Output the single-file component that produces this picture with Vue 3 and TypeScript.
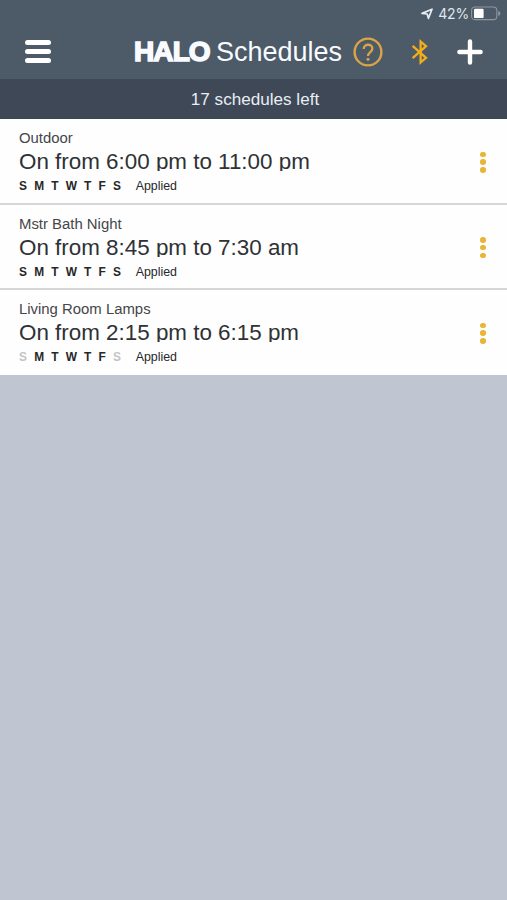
<script setup lang="ts">
interface Schedule {
  name: string
  time: string
  off: number[]
}

const days: string[] = ['S', 'M', 'T', 'W', 'T', 'F', 'S']
const schedules: Schedule[] = [
  { name: 'Outdoor', time: 'On from 6:00 pm to 11:00 pm', off: [] },
  { name: 'Mstr Bath Night', time: 'On from 8:45 pm to 7:30 am', off: [] },
  { name: 'Living Room Lamps', time: 'On from 2:15 pm to 6:15 pm', off: [0, 6] },
]
</script>

<template>
  <div class="screen">
    <div class="status">
      <svg class="location" width="13" height="12" viewBox="0 0 13 12">
        <path d="M2 5.4 L12 1.2 L8.4 10.4 L7.2 6 Z" fill="none" stroke="#e4edf3" stroke-width="1.7" stroke-linejoin="round" />
      </svg>
      <span class="percent">42%</span>
      <svg class="battery" width="31" height="16" viewBox="0 0 31 16">
        <rect x="1.6" y="1" width="25.2" height="12.6" rx="3.4" fill="none" stroke="#8b98a2" stroke-width="1.1" />
        <rect x="4" y="2.7" width="9.6" height="9.4" rx="1.2" fill="#fff" />
        <path d="M28.2 4.8 Q30.4 5.8 30.4 7.4 Q30.4 9 28.2 10 Z" fill="#8b98a2" />
      </svg>
    </div>

    <header class="bar">
      <button class="menu" aria-label="Menu"><i></i><i></i><i></i></button>
      <h1 class="title"><b>HALO</b><span>Schedules</span></h1>
      <svg class="help" width="30" height="30" viewBox="0 0 30 30" fill="none" stroke="#d9a548">
        <circle cx="15" cy="15" r="13.4" stroke-width="2.4" />
        <path d="M10.7 12 C10.7 6.4 19.4 6.4 19.4 11.6 C19.4 15.1 15 15 15 19" stroke-width="2.3" />
        <circle cx="15" cy="22.2" r="1.5" fill="#d9a548" stroke="none" />
      </svg>
      <svg class="bluetooth" width="18" height="26" viewBox="0 0 18 26" fill="none" stroke="#f0ae1c" stroke-width="2.3">
        <path d="M1.6 6.8 L15 18.8 L9.6 23.4 V2.6 L15 7.2 L1.6 19.2" />
      </svg>
      <svg class="plus" width="26" height="26" viewBox="0 0 26 26" stroke="#fff" stroke-width="4.4" stroke-linecap="round">
        <path d="M13 2.4 V23.6 M2.4 13 H23.6" />
      </svg>
    </header>

    <div class="remaining">17 schedules left</div>

    <main>
      <section v-for="item in schedules" :key="item.name" class="row">
        <div class="info">
          <div class="name">{{ item.name }}</div>
          <div class="time">{{ item.time }}</div>
          <div class="meta">
            <span v-for="(day, i) in days" :key="i" class="day" :class="{ off: item.off.includes(i) }">{{ day }}</span>
            <span class="applied">Applied</span>
          </div>
        </div>
        <div class="more"><i></i><i></i><i></i></div>
      </section>
    </main>
  </div>
</template>

<style>
body {
  background: #bfc5d1;
}
</style>

<style scoped>
.screen {
  width: 507px;
  height: 900px;
  overflow: hidden;
  background: #bfc5d1;
  font-family: "Liberation Sans", Arial, sans-serif;
}
.status {
  display: flex;
  align-items: center;
  justify-content: flex-end;
  height: 27px;
  box-sizing: border-box;
  padding-right: 6px;
  background: #4d5a67;
  color: #dfe8ee;
}
.percent {
  margin: 0 1px 0 5px;
  font-family: Inter, sans-serif;
  font-size: 14px;
  letter-spacing: -0.2px;
  line-height: 16px;
}
.bar {
  display: flex;
  align-items: center;
  height: 52px;
  padding-bottom: 2px;
  box-sizing: border-box;
  background: #4d5a67;
}
.menu {
  display: flex;
  flex-direction: column;
  gap: 3.7px;
  margin: 0 0 1px 25px;
  padding: 0;
  border: 0;
  background: none;
}
.menu i {
  width: 26px;
  height: 5.2px;
  border-radius: 2.6px;
  background: #fff;
}
.title {
  display: flex;
  align-items: baseline;
  width: 209px;
  margin: 0 0 0 83px;
  color: #f8fbff;
  font-size: 27px;
  font-weight: 400;
  line-height: 32px;
  white-space: nowrap;
}
.title b {
  width: 82px;
  font-size: 28px;
  letter-spacing: -0.9px;
  -webkit-text-stroke: 1.6px #f8fbff;
}
.help {
  margin-left: 10px;
}
.bluetooth {
  margin-left: 28px;
}
.plus {
  margin: 0 0 1px 28px;
}
.remaining {
  height: 40px;
  padding-left: 3px;
  background: #3e4856;
  color: #e8eef4;
  font-size: 17.1px;
  line-height: 42px;
  text-align: center;
}
.row {
  display: flex;
  justify-content: space-between;
  height: 85.5px;
  box-sizing: border-box;
  padding: 10px 21px 0 19px;
  border-bottom: 2px solid #d5d6d8;
  background: #fefefe;
}
.row:last-child {
  height: 85px;
  border-bottom-width: 0;
}
.name {
  color: #45464a;
  font-size: 14.9px;
  line-height: 19px;
}
.time {
  height: 23px;
  overflow: hidden;
  color: #2f3135;
  font-size: 22.4px;
  line-height: 28px;
}
.meta {
  display: flex;
  gap: 7.2px;
  margin-top: 8px;
  color: #26272a;
  font-size: 11.9px;
  line-height: 15px;
}
.day {
  font-weight: 700;
}
.day.off {
  color: #c3c4c7;
}
.applied {
  margin-left: 7.5px;
  font-size: 12.4px;
}
.more {
  display: flex;
  flex-direction: column;
  gap: 2.3px;
  padding-top: 22.5px;
}
.more i {
  width: 5.6px;
  height: 5.6px;
  border-radius: 50%;
  background: #e9b536;
}
</style>
